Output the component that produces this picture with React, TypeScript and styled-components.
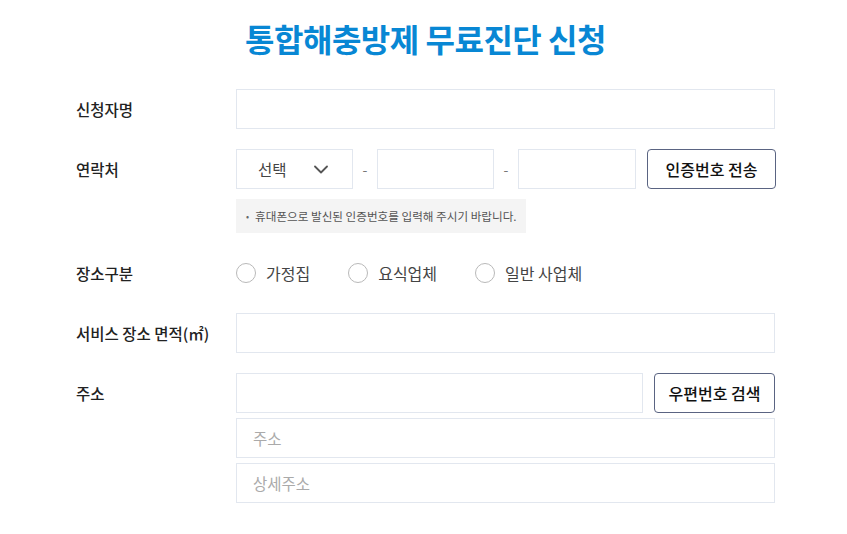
import styled, { createGlobalStyle } from 'styled-components';

const GlobalStyle = createGlobalStyle`
  * {
    box-sizing: border-box;
  }

  body {
    margin: 0;
    background: #fff;
    font-family: 'Noto Sans CJK KR', 'Noto Sans', sans-serif;
    color: #222;
  }
`;

const Page = styled.main`
  padding: 16px 72px 30px 76px;
`;

const Title = styled.h1`
  margin: 0 0 29px;
  height: 44px;
  line-height: 44px;
  text-align: center;
  font-size: 32px;
  font-weight: 700;
  letter-spacing: -0.5px;
  color: #0887d4;
`;

const Form = styled.form`
  display: flex;
  flex-direction: column;
  gap: 20px;
`;

const Row = styled.div`
  display: grid;
  grid-template-columns: 160px 1fr;
  align-items: start;
`;

const Label = styled.label`
  height: 40px;
  line-height: 40px;
  font-size: 15.5px;
  font-weight: 500;
  color: #222;
  white-space: nowrap;
`;

const Field = styled.div`
  display: flex;
  flex-direction: column;
  gap: 5px;
`;

const Input = styled.input`
  width: 100%;
  height: 40px;
  padding: 0 16px;
  border: 1px solid #e2e7ef;
  border-radius: 0;
  outline: none;
  font-family: inherit;
  font-size: 15.5px;
  color: #222;
  background: #fff;

  &::placeholder {
    color: #aaa;
  }
`;

const PhoneLine = styled.div`
  display: grid;
  grid-template-columns: 117px 24px 117px 24px 118px 11px 129px;
  align-items: center;
`;

const Dash = styled.span`
  text-align: center;
  font-size: 14px;
  color: #777;
`;

const SelectBox = styled.div`
  height: 40px;
  display: flex;
  align-items: center;
  justify-content: space-between;
  padding: 0 24px 0 21px;
  border: 1px solid #e2e7ef;
  font-size: 15.5px;
  color: #444;
`;

const OutlineButton = styled.button`
  height: 40px;
  padding: 0;
  border: 1px solid #5a6482;
  border-radius: 4px;
  background: #fff;
  font-family: inherit;
  font-size: 16px;
  font-weight: 500;
  color: #111;
  cursor: pointer;
`;

const Note = styled.p`
  align-self: flex-start;
  margin: 5px 0 0;
  padding: 0 9px 0 10px;
  height: 34px;
  line-height: 34px;
  background: #f4f4f4;
  font-size: 11.6px;
  color: #555;

  &::before {
    content: '•';
    margin-right: 6px;
    color: #666;
    font-size: 9px;
    vertical-align: 1px;
  }
`;

const RadioGroup = styled.div`
  height: 40px;
  display: flex;
  align-items: center;
  gap: 38px;
`;

const RadioOption = styled.label`
  display: flex;
  align-items: center;
  gap: 10px;
  font-size: 16px;
  color: #444;
  cursor: pointer;
`;

const Circle = styled.span`
  width: 20px;
  height: 20px;
  border-radius: 50%;
  border: 1px solid #b9b9b9;
  background: #fff;
`;

const AddressLine = styled.div`
  display: grid;
  grid-template-columns: 1fr 121px;
  gap: 11px;
`;

const Chevron = () => (
  <svg width="14" height="9" viewBox="0 0 14 9" fill="none">
    <polyline points="1,1.5 7,7.5 13,1.5" stroke="#555" strokeWidth="1.8" strokeLinecap="round" strokeLinejoin="round" />
  </svg>
);

const places = ['가정집', '요식업체', '일반 사업체'];

const App = () => {
  return (
    <>
      <GlobalStyle />
      <Page>
        <Title>통합해충방제 무료진단 신청</Title>
        <Form onSubmit={(e) => e.preventDefault()}>
          <Row>
            <Label>신청자명</Label>
            <Input />
          </Row>
          <Row>
            <Label>연락처</Label>
            <Field>
              <PhoneLine>
                <SelectBox>
                  선택
                  <Chevron />
                </SelectBox>
                <Dash>-</Dash>
                <Input />
                <Dash>-</Dash>
                <Input />
                <span />
                <OutlineButton type="button">인증번호 전송</OutlineButton>
              </PhoneLine>
              <Note>휴대폰으로 발신된 인증번호를 입력해 주시기 바랍니다.</Note>
            </Field>
          </Row>
          <Row>
            <Label>장소구분</Label>
            <RadioGroup>
              {places.map((p) => (
                <RadioOption key={p}>
                  <Circle />
                  {p}
                </RadioOption>
              ))}
            </RadioGroup>
          </Row>
          <Row>
            <Label>서비스 장소 면적(㎡)</Label>
            <Input />
          </Row>
          <Row>
            <Label>주소</Label>
            <Field>
              <AddressLine>
                <Input />
                <OutlineButton type="button">우편번호 검색</OutlineButton>
              </AddressLine>
              <Input placeholder="주소" />
              <Input placeholder="상세주소" />
            </Field>
          </Row>
        </Form>
      </Page>
    </>
  );
};

export default App;
